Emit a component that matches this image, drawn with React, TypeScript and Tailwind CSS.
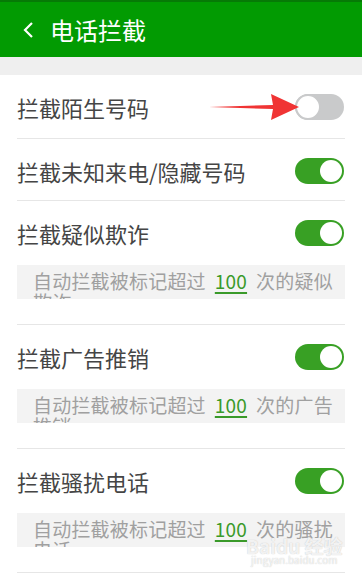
import React from 'react';

const font = { fontFamily: '"Noto Sans CJK SC", "Noto Sans", sans-serif' };

function Toggle({ on }: { on: boolean }) {
  return on ? (
    <div className="flex h-[26px] w-[49px] shrink-0 items-center justify-end rounded-full bg-[#38a024] pr-[2px]">
      <div className="h-[22px] w-[22px] rounded-full bg-white" />
    </div>
  ) : (
    <div className="flex h-[26px] w-[49px] shrink-0 items-center rounded-full bg-[#c9cacb]">
      <div className="h-[26px] w-[26px] rounded-full border-2 border-[#c9cacb] bg-white" />
    </div>
  );
}

type Item = { label: string; on: boolean; hint?: string };

const items: Item[] = [
  { label: '拦截陌生号码', on: false },
  { label: '拦截未知来电/隐藏号码', on: true },
  { label: '拦截疑似欺诈', on: true, hint: '疑似欺诈' },
  { label: '拦截广告推销', on: true, hint: '广告推销' },
  { label: '拦截骚扰电话', on: true, hint: '骚扰电话' },
];

function Row({ item, first }: { item: Item; first: boolean }) {
  const h = first ? 'h-[63px]' : item.hint ? 'h-[64px]' : 'h-[61px] pt-[2px]';
  return (
    <div className="relative border-b border-[#e6e6e6]">
      <div className={`flex items-center justify-between pr-px ${h}`}>
        <span className="text-[22px] leading-none text-[#454545]">{item.label}</span>
        <Toggle on={item.on} />
      </div>
      {item.hint && (
        <div className="mb-[25px] h-[34px] overflow-hidden bg-[#f3f3f3] pl-[16px] pr-[6px] pt-[5px] text-[19px] leading-[21px] tracking-[0.2px] text-[#a0a0a0]">
          自动拦截被标记超过
          <span className="mx-[9px] text-[#3a9a2a] underline decoration-[1.5px] underline-offset-[3px]">100</span>
          次的{item.hint}
        </div>
      )}
      {first && (
        <svg
          className="absolute left-[192px] top-[19px]"
          width="90"
          height="26"
          viewBox="0 0 90 26"
        >
          <polygon points="0,13 64,11 62,0 90,13 62,26 64,15" fill="#f03434" />
        </svg>
      )}
    </div>
  );
}

export default function App() {
  return (
    <div className="relative h-[573px] w-[362px] overflow-hidden bg-white" style={font}>
      <div className="flex h-[57px] items-center border-t-2 border-[#067a06] bg-[#029b02] pl-[23px]">
        <svg width="12" height="18" viewBox="0 0 12 18" className="mr-[15px]">
          <polyline points="9,2 2,9 9,16" fill="none" stroke="white" strokeWidth="2.2" />
        </svg>
        <span className="text-[24px] leading-none text-white">电话拦截</span>
      </div>
      <div className="h-[18px] bg-[#efefef]" />
      <div className="flex flex-col pl-[17px] pr-[17px]">
        {items.map((it, i) => (
          <Row key={it.label} item={it} first={i === 0} />
        ))}
      </div>
      <div className="pointer-events-none absolute left-[246px] top-[536px] flex flex-col items-center text-white/80 [text-shadow:0_0_1px_#b8b8b8]">
        <span className="text-[19px] font-bold leading-none">Baidu 经验</span>
        <span className="text-[10px] leading-none">jingyan.baidu.com</span>
      </div>
    </div>
  );
}
